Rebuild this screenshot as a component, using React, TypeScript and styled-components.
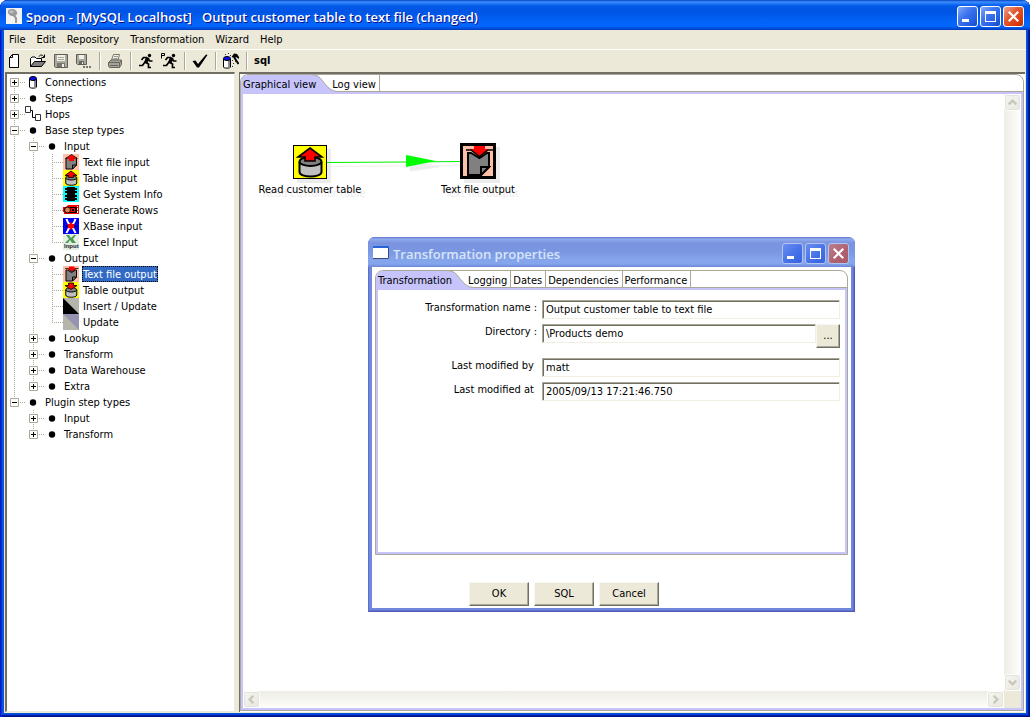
import React from "react";
import styled, { createGlobalStyle, css } from "styled-components";

const uiFont = `"DejaVu Sans Condensed", "DejaVu Sans", sans-serif`;
const titleFont = `"Open Sans", "Noto Sans", sans-serif`;
const face = "#ece9d8";
const line = "#aca899";
const dark = "#716f64";
const lilac = "#c6c4fb";

const GlobalStyle = createGlobalStyle`
  * { box-sizing: border-box; }
  body { margin: 0; background: #fff; font: 11px/14px ${uiFont}; color: #000; }
  button, input { font: inherit; color: inherit; margin: 0; padding: 0; }
  button { border: 0; background: none; white-space: nowrap; }
  svg { display: block; flex: none; }
`;

/* ---------- window frame ---------- */

const AppWindow = styled.main`
  min-height: 100vh;
  display: flex;
  flex-direction: column;
  border-radius: 8px 8px 0 0;
  overflow: hidden;
  background: #0855dd;
  box-shadow: inset 1px 0 #0019cf, inset 2px 0 #0831d9, inset -1px -1px #00138c,
    inset -2px -2px #001ea0, inset -3px -3px #0441d8;
`;

const TitleBar = styled.header<{ $inactive?: boolean }>`
  display: flex;
  align-items: center;
  flex: none;
  height: 30px;
  padding: 2px 6px 0 ${(p) => (p.$inactive ? "5px" : "6px")};
  gap: 4px;
  background: ${(p) =>
    p.$inactive
      ? "linear-gradient(#5d77cf 0, #91acee 2px, #8aa5ea 3px, #7a94df 6px, #7a96e1 14px, #84a5eb 23px, #84a5eb 27px, #6d86da 30px)"
      : "linear-gradient(#0a3fc0 0, #3c91ff 2px, #1a70f5 4px, #0359e7 6px, #0054e3 12px, #0262f6 20px, #0267ff 26px, #0048d2 29px, #0038b8 30px)"};
`;

const TitleText = styled.h1<{ $inactive?: boolean }>`
  flex: 1;
  margin: 0;
  padding-top: 1px;
  font: 600 13px/18px ${titleFont};
  white-space: pre;
  overflow: hidden;
  color: ${(p) => (p.$inactive ? "#d8e4f8" : "#fff")};
  text-shadow: ${(p) => (p.$inactive ? "none" : "1px 1px #0f1089")};
`;

const CaptionButtons = styled.div`
  display: flex;
  gap: 2px;
`;

const CaptionButton = styled.button<{ $close?: boolean; $inactive?: boolean }>`
  width: 21px;
  height: 21px;
  display: grid;
  place-items: center;
  border: 1px solid ${(p) => (p.$inactive ? "#b4c4f0" : "#fff")};
  border-radius: 3px;
  background: ${(p) =>
    p.$close
      ? p.$inactive
        ? "linear-gradient(135deg, #b9808f, #b0606f 60%, #a85a6c)"
        : "linear-gradient(135deg, #f0a48c, #e35a34 40%, #da3c10 75%, #b83008)"
      : p.$inactive
        ? "linear-gradient(135deg, #6a8df0, #4470e8 60%, #3a63dc)"
        : "linear-gradient(135deg, #85a9f6, #3d75ee 40%, #245fe4 75%, #1446c0)"};
`;

const Client = styled.div`
  flex: 1;
  display: flex;
  flex-direction: column;
  margin: 0 4px 4px;
  background: ${face};
`;

/* ---------- menu and tool bar ---------- */

const MenuBar = styled.nav`
  display: flex;
  gap: 1px;
  height: 20px;
  border-bottom: 1px solid #fff;
`;

const MenuItem = styled.button`
  height: 19px;
  padding: 0 5px;
`;

const ToolBar = styled.div`
  display: flex;
  align-items: center;
  height: 22px;
`;

const ToolButton = styled.button`
  width: 23px;
  height: 22px;
  padding-left: 3px;
  display: grid;
  place-items: center start;
  font: bold 11px/14px ${uiFont};
`;

const ToolSeparator = styled.div`
  width: 8px;
  height: 18px;
  background: linear-gradient(90deg, transparent 3px, ${line} 3px 4px, #fff 4px 5px, transparent 5px);
`;

/* ---------- main split ---------- */

const Split = styled.div`
  flex: 1;
  display: grid;
  grid-template-columns: 230px 1fr;
  column-gap: 4px;
  padding: 0 1px 1px 1px;
`;

const TreePanel = styled.ul`
  margin: 0;
  padding: 0;
  list-style: none;
  background: #fff;
  border: 1px solid ${face};
  border-top: 2px solid ${dark};
  border-left: 2px solid ${dark};
`;

const TreeRow = styled.li`
  display: flex;
  height: 16px;
`;

const dotsV = `repeating-linear-gradient(${line} 0 1px, transparent 1px 2px)`;
const dotsH = `repeating-linear-gradient(90deg, ${line} 0 1px, transparent 1px 2px)`;

const Indent = styled.span<{ $line: boolean }>`
  flex: none;
  width: 19px;
  height: 16px;
  ${(p) => p.$line && css`background: ${dotsV} 7px 0 / 1px 16px no-repeat;`}
`;

const Joint = styled.span<{ $up: boolean; $down: boolean }>`
  flex: none;
  display: flex;
  align-items: center;
  width: 18px;
  height: 16px;
  padding-left: 3px;
  background: ${dotsH} 7px 8px / 11px 1px no-repeat
    ${(p) => (p.$up ? `, ${dotsV} 7px 0 / 1px 8px no-repeat` : "")}
    ${(p) => (p.$down ? `, ${dotsV} 7px 8px / 1px 8px no-repeat` : "")};
`;

const Expander = styled.button`
  width: 9px;
  height: 9px;
  background: #fff;
`;

const TreeLabel = styled.span<{ $selected?: boolean }>`
  height: 16px;
  margin-left: 3px;
  padding: 2px 1px 0;
  line-height: 14px;
  white-space: nowrap;
  ${(p) =>
    p.$selected &&
    css`
      background: #316ac5;
      color: #fff;
      outline: 1px dotted #000;
      outline-offset: -1px;
    `}
`;

/* ---------- tab folder ---------- */

const CanvasFrame = styled.section`
  display: flex;
  min-width: 0;
  border: solid ${dark};
  border-width: 2px 0 0 1px;
  padding: 0 1px 1px 0;
  background: #fff;
`;

const Folder = styled.div`
  flex: 1;
  min-width: 0;
  display: flex;
  flex-direction: column;
  border: 1px solid ${line};
  border-radius: 8px 8px 0 0;
`;

const TabStrip = styled.div`
  display: flex;
  height: 17px;
  border-bottom: 1px solid ${line};
`;

const PlainTab = styled.button`
  height: 16px;
  padding: 3px 3px 0 2px;
  border-right: 1px solid ${line};
  line-height: 13px;
  position: relative;
`;

const ActiveTabButton = styled.button`
  position: relative;
  height: 17px;
  margin-right: 14px;
  padding: 2px 0 0 2px;
  line-height: 14px;
  &::before {
    content: "";
    position: absolute;
    inset: 0 6px 0 0;
    background: ${lilac};
    border-radius: 7px 0 0 0;
  }
  svg {
    position: absolute;
    right: -23px;
    top: -1px;
  }
  span {
    position: relative;
  }
`;

const FolderBody = styled.div`
  flex: 1;
  display: flex;
  flex-direction: column;
  border: 2px solid ${lilac};
  background: #fff;
`;

function ActiveTab({ children }: { children: React.ReactNode }) {
  return (
    <ActiveTabButton type="button" role="tab" aria-selected="true">
      <svg width="30" height="18" viewBox="0 0 30 18" aria-hidden="true">
        <path d="M0 0.5C12 0.5 12 6 17 11C21 15.500 24 17.500 30 17.500V18H0Z" fill={lilac} />
        <path d="M0 0.5C12 0.5 12 6 17 11C21 15.500 24 17.500 30 17.500" fill="none" stroke={line} />
      </svg>
      <span>{children}</span>
    </ActiveTabButton>
  );
}

/* ---------- drawing area ---------- */

const Viewport = styled.div`
  flex: 1;
  display: grid;
  grid-template: 1fr 17px / 1fr 17px;
`;

const Canvas = styled.div`
  position: relative;
  background: #fff;
`;

const ScrollTrack = styled.div<{ $vertical?: boolean }>`
  display: flex;
  flex-direction: ${(p) => (p.$vertical ? "column" : "row")};
  justify-content: space-between;
  background: linear-gradient(${(p) => (p.$vertical ? "90deg" : "180deg")}, #eeede5, #fefefb);
`;

const ScrollCorner = styled.div`
  background: ${face};
`;

const ScrollButton = styled.button`
  width: 17px;
  height: 17px;
  display: grid;
  place-items: center;
  border: 1px solid #fff;
  border-radius: 3px;
  background: linear-gradient(135deg, #f6f6f2, #e8e8e0);
  box-shadow: inset 0 0 0 1px #e4e3da;
`;

const Hop = styled.svg`
  position: absolute;
  left: 0;
  top: 0;
  pointer-events: none;
`;

const StepNode = styled.figure<{ $x: number; $y: number }>`
  position: absolute;
  left: ${(p) => p.$x}px;
  top: ${(p) => p.$y}px;
  width: 120px;
  margin: 0;
  display: flex;
  flex-direction: column;
  align-items: center;
  gap: 4px;
  svg {
    box-shadow: 4px 4px #ececec;
  }
  figcaption {
    white-space: nowrap;
    text-shadow: 4px 4px #ececec;
  }
`;

/* ---------- dialog ---------- */

const DialogWindow = styled.div`
  position: absolute;
  left: 125px;
  top: 143px;
  width: 487px;
  height: 375px;
  display: flex;
  flex-direction: column;
  border-radius: 7px 7px 0 0;
  overflow: hidden;
  background: #7088dd;
  box-shadow: inset 1px 0 #5b6fcb, inset -1px -1px #5058b8, inset -2px -2px #6272cf;
`;

const DialogClient = styled.form`
  flex: 1;
  display: flex;
  flex-direction: column;
  margin: 0 4px 4px;
  padding: 3px 3px 2px;
  background: #fff;
`;

const Fields = styled.div`
  display: flex;
  flex-direction: column;
  gap: 10px;
  padding: 10px 5px 0 0;
`;

const FieldRow = styled.div`
  display: flex;
  align-items: flex-start;
  height: 24px;
  label {
    flex: none;
    width: 159px;
    margin-right: 5px;
    padding-top: 1px;
    text-align: right;
    white-space: pre;
  }
`;

const TextField = styled.input`
  flex: 1;
  min-width: 0;
  height: 19px;
  padding: 0 3px;
  background: #fff;
  border: 1px solid #f1efe2;
  border-top-color: ${line};
  border-left-color: ${line};
  border-radius: 0;
  box-shadow: inset 1px 1px ${dark};
  outline: none;
`;

const PushButton = styled.button<{ $small?: boolean }>`
  width: ${(p) => (p.$small ? "24px" : "60px")};
  height: 24px;
  background: ${face};
  border: 1px solid #f8f7f0;
  border-right-color: ${dark};
  border-bottom-color: ${dark};
  box-shadow: inset -1px -1px ${line};
`;

const ButtonBar = styled.div`
  display: flex;
  gap: 5px;
  padding: 27px 0 0 94px;
`;

/* ---------- icons ---------- */

const Svg16 = ({ children }: { children: React.ReactNode }) => (
  <svg width="16" height="16" viewBox="0 0 16 16" aria-hidden="true">
    {children}
  </svg>
);

const NewIcon = () => (
  <Svg16>
    <path d="M5.500 1.500H11.500V14.500H2.500V4.500Z" fill="#fff" stroke="#000" />
    <path d="M2.500 4.500H5.500V1.500" fill="none" stroke="#000" />
  </Svg16>
);
const OpenIcon = () => (
  <Svg16>
    <path d="M0.500 13.500V5.500L2 4H5L6.500 5.500H11.500V8" fill="#fff" stroke="#000" />
    <path d="M0.500 13.500L4.500 8.500H15.500L11.500 13.500Z" fill="#808080" stroke="#000" />
    <path d="M9 3.500C10 1.500 12.500 1.500 14 4M14.500 1.500V4.500H11.500" fill="none" stroke="#000" />
  </Svg16>
);
const SaveIcon = () => (
  <Svg16>
    <path d="M1.500 1.500H14.500V14.500H2.500L1.500 13.500Z" fill="#aaa9a0" stroke="#5f5f5a" />
    <path d="M4 2H12V8H4Z" fill="#f2f0e6" />
    <path d="M4 10H12V14H4Z" fill="#77776f" />
    <path d="M9 11H11V14H9Z" fill="#f2f0e6" />
    <path d="M5 4.500H11M5 6.500H11" stroke="#aaa9a0" />
  </Svg16>
);
const SaveAsIcon = () => (
  <Svg16>
    <path d="M0.500 1.500H10.500V11.500H1.500L0.500 10.500Z" fill="#aaa9a0" stroke="#5f5f5a" />
    <path d="M3 2H8V6H3Z" fill="#f2f0e6" />
    <path d="M3 8H8V11H3Z" fill="#666" />
    <path d="M6 9H7V11H6Z" fill="#f2f0e6" />
    <path d="M7 13H9V15H7ZM10 13H12V15H10ZM13 13H15V15H13Z" fill="#77776f" />
  </Svg16>
);
const PrintIcon = () => (
  <Svg16>
    <path d="M4.500 7L6.500 1.500H12.500L11 7Z" fill="#f4f2ea" stroke="#77776f" />
    <path d="M7 3.500H11M6.500 5.500H10.500" stroke="#99988f" />
    <path d="M1.500 9.500L4 7H14.500V11.500L12.500 14.500H2.500L1.500 13Z" fill="#a5a49b" stroke="#66665f" />
    <path d="M1.500 9.500H12.500L14.500 7.500M12.500 9.500V14.500M3 12.500H11" fill="none" stroke="#66665f" />
  </Svg16>
);
const runner = (
  <>
    <circle cx="11.500" cy="2.500" r="1.700" fill="#000" />
    <path d="M9.500 4.500L7 9L10.500 11V14.500H13M7 9L4.500 12.500H1M9 4.500H5.500L3.500 7M10 5.500L11.500 8H14.500" fill="none" stroke="#000" strokeWidth="1.700" />
    <path d="M8 4L11.500 5L9.500 10L6.500 9Z" fill="#000" />
  </>
);
const RunIcon = () => <Svg16>{runner}</Svg16>;
const PreviewIcon = () => (
  <Svg16>
    <g transform="translate(1 0)">{runner}</g>
    <path d="M0.500 5.500V0.500H3.500V2.500H0.500" fill="none" stroke="#000" />
  </Svg16>
);
const CheckIcon = () => (
  <Svg16>
    <path d="M0.500 8L3.500 7.500L6 11L14 1.500L15.500 2L7 14.500H5Z" fill="#000" />
  </Svg16>
);
const Barrel = () => (
  <>
    <path d="M4.500 5V13C4.500 14.500 11.500 14.500 11.500 13V5" fill="#fff" stroke="#000" />
    <path d="M9 6H11V14H9Z" fill="#8a8a8a" />
    <ellipse cx="8" cy="4.500" rx="3.500" ry="2" fill="#0a0af0" stroke="#000" />
  </>
);
const WizardIcon = () => (
  <Svg16>
    <g transform="translate(-4 1)">
      <Barrel />
    </g>
    <path d="M8.500 4L11 0.500L14 1L16 4V6L13 4L11.500 5Z" fill="#000" />
    <path d="M11 4L15.500 11" stroke="#000" strokeWidth="2" />
    <path d="M2 1H3V2H2ZM5 0H6V1H5ZM7 2H8V3H7ZM9 7H10V8H9ZM10 10H11V11H10ZM9 13H10V14H9ZM12 8H13V9H12Z" fill="#333" />
  </Svg16>
);
const ConnectionIcon = () => (
  <Svg16>
    <Barrel />
  </Svg16>
);
const BulletIcon = () => (
  <Svg16>
    <circle cx="8" cy="8.500" r="3.200" fill="#000" />
  </Svg16>
);
const HopsIcon = () => (
  <Svg16>
    <path d="M0.500 0.500H5.500V6.500H0.500ZM10.500 8.500H15.500V14.500H10.500Z" fill="#fff" stroke="#333" />
    <path d="M6 4.500H7.500V11.500H10" fill="none" stroke="#000" />
  </Svg16>
);

/* Step artwork on a 32-unit grid, shared by the tree and the canvas. */
const tableArt = (up: boolean) => (
  <>
    <rect width="32" height="32" fill="#ff0" />
    <path d="M5.500 16V26C5.500 32 27.500 32 27.500 26V16" fill="#c0c0c0" stroke="#000" strokeWidth="2" />
    <ellipse cx="16.500" cy="15.500" rx="11" ry="4.500" fill="#808080" stroke="#000" strokeWidth="2" />
    <path
      d={up ? "M16 2L28 11H21V15H11V11H4Z" : "M11 2H21V7H28L16 15L4 7H11Z"}
      fill="#f00"
      stroke="#000"
      strokeWidth="1.600"
    />
  </>
);
const fileArt = (up: boolean) => (
  <>
    <rect width="32" height="32" fill="#ffc0a8" />
    <path
      d={up ? "M6 8H27V22L19 30H6Z" : "M6 8H9L17.500 13L25 8H27V22L19 30H6Z"}
      fill="#808080"
      stroke="#000"
      strokeWidth="2"
    />
    <path d="M19 30V22H27Z" fill="#808080" stroke="#000" strokeWidth="2" />
    <path d={up ? "M17 1L27 9H22V14H12V9H7Z" : "M12 1H23V4H27L17.500 11.500L8 4H12Z"} fill="#f00" />
    <path d={up ? "M5 9L17 1L29 9" : "M4 5H9L17.500 11.500L26 5H31"} fill="none" stroke="#000" strokeWidth="1.500" />
  </>
);

const ArtIcon = ({ art }: { art: React.ReactNode }) => (
  <svg width="16" height="16" viewBox="0 0 32 32" aria-hidden="true">
    {art}
  </svg>
);
const ChipIcon = () => (
  <Svg16>
    <rect width="16" height="16" fill="#0ff" />
    <path d="M4 1H12V15H4ZM2 2H14V4H2ZM2 5H14V7H2ZM2 9H14V11H2ZM2 12H14V14H2Z" fill="#000" />
  </Svg16>
);
const RowsIcon = () => (
  <Svg16>
    <path d="M0 5H3L5 3H16V12H1V10H0Z" fill="#f00" />
    <path d="M1.500 6.500L3 5M7 5.500H13.500V10.500H7" fill="none" stroke="#000" />
    <circle cx="4.500" cy="8" r="3" fill="#e08050" stroke="#000" />
    <path d="M9 7H11V9H9ZM12 6H13V10H12Z" fill="#000" />
    <path d="M14 4H15V5H14ZM14 6H15V8H14ZM14 9H15V11H14Z" fill="#fff" />
  </Svg16>
);
const XBaseIcon = () => (
  <Svg16>
    <rect width="16" height="16" fill="#0000f0" />
    <path d="M3.500 1C4.500 5 5.500 6 8 8C5.500 10 4.500 12 3.500 15M12.500 1C11.500 5 10.500 6 8 8C10.500 10 11.500 12 12.500 15" fill="none" stroke="#fff" strokeWidth="2" />
    <path d="M3 8H13" stroke="#000" />
    <path d="M8 4L9.500 6L11.500 6L11 8L11.500 10.500L9.500 10L8 12L6.500 10L4.500 10.500L5 8L4.500 6L6.500 6Z" fill="#f00" />
  </Svg16>
);
const ExcelIcon = () => (
  <Svg16>
    <rect width="16" height="16" fill="#e4efe2" />
    <path d="M3 1H6L8 4L11 1H13L10 5L13 9H9L7 6L5 9H2L6 5Z" fill="#4a9a50" />
    <text x="1" y="14" fontSize="6" fontWeight="bold" fontFamily="Liberation Sans, sans-serif" fill="#123">
      Input
    </text>
  </Svg16>
);
const InsertIcon = () => (
  <Svg16>
    <rect width="16" height="16" fill="#b5b5ab" />
    <path d="M0 0L16 16H0Z" fill="#000" />
  </Svg16>
);
const UpdateIcon = () => (
  <Svg16>
    <rect width="16" height="16" fill="#b5b5ab" />
    <path d="M0 0H16V16Z" fill="#9494b0" />
  </Svg16>
);

const SpoonIcon = () => (
  <Svg16>
    <rect width="16" height="16" fill="#f2f2f2" />
    <ellipse cx="6.500" cy="4.500" rx="4.800" ry="3.500" fill="#9a9a9a" transform="rotate(15 6.500 4.500)" />
    <ellipse cx="5.500" cy="3.800" rx="2.500" ry="1.500" fill="#bbb" />
    <path d="M7.500 7L10 10V15" fill="none" stroke="#999" strokeWidth="2" />
  </Svg16>
);
const DialogIcon = () => (
  <Svg16>
    <rect x="0" y="1" width="16" height="13" fill="#fff" />
    <path d="M0 1H16V3H0Z" fill="#2a62d8" />
    <path d="M15.500 3V13.500H0" fill="none" stroke="#3a4a80" />
  </Svg16>
);

const arrows = {
  up: "M4 10L8 6L12 10",
  down: "M4 6L8 10L12 6",
  left: "M10 4L6 8L10 12",
  right: "M6 4L10 8L6 12",
};
const Arrow = ({ dir }: { dir: keyof typeof arrows }) => (
  <svg width="15" height="15" viewBox="0 0 16 16" aria-hidden="true">
    <path d={arrows[dir]} fill="none" stroke="#c9c7ba" strokeWidth="2.500" />
  </svg>
);

const captionGlyphs = [
  { name: "Minimize", d: "M4 12H11V15H4Z" },
  { name: "Maximize", d: "M4 4H15V15H4ZM5 7V14H14V7Z" },
  { name: "Close", d: "M4 5.500L5.500 4L9.500 8L13.500 4L15 5.500L11 9.500L15 13.500L13.500 15L9.500 11L5.500 15L4 13.500L8 9.500Z" },
];
function Caption({ inactive }: { inactive?: boolean }) {
  return (
    <CaptionButtons>
      {captionGlyphs.map((g) => (
        <CaptionButton key={g.name} type="button" aria-label={g.name} $inactive={inactive} $close={g.name === "Close"}>
          <svg width="19" height="19" viewBox="0 0 19 19" aria-hidden="true">
            <path d={g.d} fill="#fff" fillRule="evenodd" />
          </svg>
        </CaptionButton>
      ))}
    </CaptionButtons>
  );
}

/* ---------- data ---------- */

type Item = { label: string; icon?: React.ReactNode; closed?: boolean; selected?: boolean; children?: Item[] };

const tree: Item[] = [
  { label: "Connections", icon: <ConnectionIcon />, closed: true },
  { label: "Steps", closed: true },
  { label: "Hops", icon: <HopsIcon />, closed: true },
  {
    label: "Base step types",
    children: [
      {
        label: "Input",
        children: [
          { label: "Text file input", icon: <ArtIcon art={fileArt(true)} /> },
          { label: "Table input", icon: <ArtIcon art={tableArt(true)} /> },
          { label: "Get System Info", icon: <ChipIcon /> },
          { label: "Generate Rows", icon: <RowsIcon /> },
          { label: "XBase input", icon: <XBaseIcon /> },
          { label: "Excel Input", icon: <ExcelIcon /> },
        ],
      },
      {
        label: "Output",
        children: [
          { label: "Text file output", icon: <ArtIcon art={fileArt(false)} />, selected: true },
          { label: "Table output", icon: <ArtIcon art={tableArt(false)} /> },
          { label: "Insert / Update", icon: <InsertIcon /> },
          { label: "Update", icon: <UpdateIcon /> },
        ],
      },
      { label: "Lookup", closed: true },
      { label: "Transform", closed: true },
      { label: "Data Warehouse", closed: true },
      { label: "Extra", closed: true },
    ],
  },
  {
    label: "Plugin step types",
    children: [
      { label: "Input", closed: true },
      { label: "Transform", closed: true },
    ],
  },
];

function TreeItems({ items, guides = [] }: { items: Item[]; guides?: boolean[] }) {
  return (
    <>
      {items.map((item, i) => {
        const last = i === items.length - 1;
        const expandable = item.closed || item.children;
        return (
          <React.Fragment key={item.label}>
            <TreeRow role="treeitem" aria-level={guides.length + 1}>
              {guides.map((g, n) => (
                <Indent key={n} $line={g} />
              ))}
              <Joint $up={guides.length > 0 || i > 0} $down={!last}>
                {expandable && (
                  <Expander aria-label={item.closed ? `Expand ${item.label}` : `Collapse ${item.label}`}>
                    <svg width="9" height="9" viewBox="0 0 9 9" aria-hidden="true">
                      <path d="M0.500 0.500H8.500V8.500H0.500Z" fill="#fff" stroke={line} />
                      <path d={item.closed ? "M2 4.500H7M4.500 2V7" : "M2 4.500H7"} stroke="#000" />
                    </svg>
                  </Expander>
                )}
              </Joint>
              {item.icon ?? <BulletIcon />}
              <TreeLabel $selected={item.selected}>{item.label}</TreeLabel>
            </TreeRow>
            {item.children && <TreeItems items={item.children} guides={[...guides, !last]} />}
          </React.Fragment>
        );
      })}
    </>
  );
}

const tools: ({ name: string; icon: React.ReactNode } | null)[] = [
  { name: "New", icon: <NewIcon /> },
  { name: "Open", icon: <OpenIcon /> },
  { name: "Save", icon: <SaveIcon /> },
  { name: "Save as", icon: <SaveAsIcon /> },
  null,
  { name: "Print", icon: <PrintIcon /> },
  null,
  { name: "Run", icon: <RunIcon /> },
  { name: "Preview", icon: <PreviewIcon /> },
  null,
  { name: "Verify", icon: <CheckIcon /> },
  null,
  { name: "Connection wizard", icon: <WizardIcon /> },
  null,
  { name: "SQL editor", icon: "sql" },
];

function PropertiesDialog() {
  return (
    <DialogWindow role="dialog" aria-labelledby="dialog-title">
      <TitleBar as="div" $inactive>
        <DialogIcon />
        <TitleText as="h2" id="dialog-title" $inactive>
          Transformation properties
        </TitleText>
        <Caption inactive />
      </TitleBar>
      <DialogClient onSubmit={(e) => e.preventDefault()}>
        <Folder>
          <TabStrip role="tablist">
            <ActiveTab>Transformation</ActiveTab>
            {["Logging", "Dates", "Dependencies", "Performance"].map((t) => (
              <PlainTab key={t} type="button" role="tab">
                {t}
              </PlainTab>
            ))}
          </TabStrip>
          <FolderBody>
            <Fields>
              <div>
                <FieldRow>
                  <label htmlFor="name">Transformation name :</label>
                  <TextField id="name" defaultValue="Output customer table to text file" />
                </FieldRow>
                <FieldRow>
                  <label htmlFor="dir">Directory :</label>
                  <TextField id="dir" defaultValue="\Products demo" />
                  <PushButton type="button" $small aria-label="Browse">
                    ...
                  </PushButton>
                </FieldRow>
              </div>
              <div>
                <FieldRow>
                  <label htmlFor="by">{"Last modified by "}</label>
                  <TextField id="by" defaultValue="matt" />
                </FieldRow>
                <FieldRow>
                  <label htmlFor="at">{"Last modified at "}</label>
                  <TextField id="at" defaultValue="2005/09/13 17:21:46.750" />
                </FieldRow>
              </div>
            </Fields>
          </FolderBody>
        </Folder>
        <ButtonBar>
          <PushButton type="submit">OK</PushButton>
          <PushButton type="button">SQL</PushButton>
          <PushButton type="button">Cancel</PushButton>
        </ButtonBar>
      </DialogClient>
    </DialogWindow>
  );
}

export default function App() {
  return (
    <AppWindow>
      <GlobalStyle />
      <TitleBar>
        <SpoonIcon />
        <TitleText>{"Spoon - [MySQL Localhost]   Output customer table to text file (changed)"}</TitleText>
        <Caption />
      </TitleBar>
      <Client>
        <MenuBar>
          {["File", "Edit", "Repository", "Transformation", "Wizard", "Help"].map((m) => (
            <MenuItem key={m}>{m}</MenuItem>
          ))}
        </MenuBar>
        <ToolBar role="toolbar">
          {tools.map((t, i) =>
            t ? (
              <ToolButton key={i} aria-label={t.name}>
                {t.icon}
              </ToolButton>
            ) : (
              <ToolSeparator key={i} />
            ),
          )}
        </ToolBar>
        <Split>
          <TreePanel role="tree">
            <TreeItems items={tree} />
          </TreePanel>
          <CanvasFrame>
            <Folder>
              <TabStrip role="tablist">
                <ActiveTab>Graphical view</ActiveTab>
                <PlainTab role="tab">Log view</PlainTab>
              </TabStrip>
              <FolderBody>
                <Viewport>
                  <Canvas>
                    <StepNode $x={7} $y={51}>
                      <svg width="34" height="34" viewBox="0 0 34 34" aria-hidden="true">
                        <rect width="34" height="34" fill="#000" />
                        <g transform="translate(1 1)">{tableArt(true)}</g>
                        <rect x="0.500" y="0.500" width="33" height="33" fill="none" stroke="#000" />
                      </svg>
                      <figcaption>Read customer table</figcaption>
                    </StepNode>
                    <StepNode $x={175} $y={49}>
                      <svg width="36" height="36" viewBox="0 0 36 36" aria-hidden="true">
                        <g transform="translate(2 2)">{fileArt(false)}</g>
                        <rect x="1.500" y="1.500" width="33" height="33" fill="none" stroke="#000" strokeWidth="3" />
                      </svg>
                      <figcaption>Text file output</figcaption>
                    </StepNode>
                    <Hop width="260" height="90" viewBox="0 0 260 90" aria-hidden="true">
                      <path d="M88 72.500L217 71.500M167 66V77L196 73Z" fill="#ececec" stroke="#f0f0f0" />
                      <path d="M84 68.500L164 68L217 67.500" stroke="#00f000" fill="none" strokeWidth="1.200" />
                      <path d="M163 61V73L193 67Z" fill="#0f0" />
                    </Hop>
                    <PropertiesDialog />
                  </Canvas>
                  <ScrollTrack $vertical>
                    <ScrollButton aria-label="Scroll up">
                      <Arrow dir="up" />
                    </ScrollButton>
                    <ScrollButton aria-label="Scroll down">
                      <Arrow dir="down" />
                    </ScrollButton>
                  </ScrollTrack>
                  <ScrollTrack>
                    <ScrollButton aria-label="Scroll left">
                      <Arrow dir="left" />
                    </ScrollButton>
                    <ScrollButton aria-label="Scroll right">
                      <Arrow dir="right" />
                    </ScrollButton>
                  </ScrollTrack>
                  <ScrollCorner />
                </Viewport>
              </FolderBody>
            </Folder>
          </CanvasFrame>
        </Split>
      </Client>
    </AppWindow>
  );
}
